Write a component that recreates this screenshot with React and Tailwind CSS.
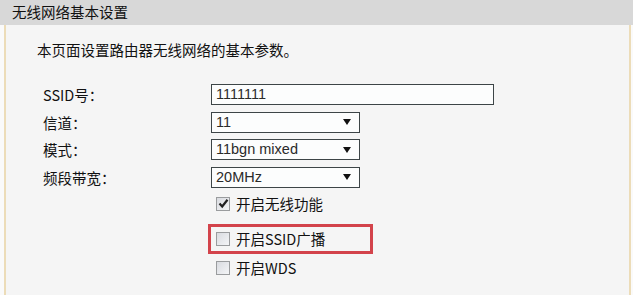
import React from 'react';

const cjk = { fontFamily: '"Noto Sans CJK SC", "Noto Sans", sans-serif' };
const latin = { fontFamily: '"Liberation Sans", Arial, sans-serif' };

function Select({ value }) {
    return (
        <div className="w-[149px] h-[21px] bg-[#fcfdfd] border border-[#3d4547] flex items-center justify-between pl-[4px] pr-[8px] text-[14.5px] text-[#2a2a2a]" style={latin}>
            <span>{value}</span>
            <svg width="8" height="8" viewBox="0 0 8 8"><path d="M0 1 L8 1 L4 7 Z" fill="#111" /></svg>
        </div>
    );
}

function Checkbox({ checked }) {
    return (
        <span className="w-[14px] h-[14px] border border-[#9a9c9e] bg-gradient-to-br from-[#d9dbe0] to-[#f4f5f7] flex items-center justify-center shrink-0">
            {checked &&
                <svg width="11" height="11" viewBox="0 0 11 11">
                    <path d="M1.5 5.5 L4.2 8.5 L9.5 1.8" stroke="#222" strokeWidth="2.2" fill="none" />
                </svg>
            }
        </span>
    );
}

export default function App() {
    return (
        <div className="w-[633px] h-[295px] bg-[#fafafa] overflow-hidden text-[#111]" style={cjk}>
            <div className="h-[25px] bg-[#d8d8d8] pl-[12px] flex items-center text-[14.5px] leading-none">
                无线网络基本设置
            </div>
            <div className="ml-[4px] mr-[2px] h-[270px] bg-[#f5f5f5] border-l-2 border-r-2 border-[#ecdcb8] pl-[31px] pt-[15px]">
                <p className="text-[14.5px] leading-[20px]">本页面设置路由器无线网络的基本参数。</p>
                <div className="grid grid-cols-[168px_auto] gap-y-[6.5px] mt-[24px] pl-[6px] text-[14.5px] leading-[21px] items-center">
                    <span>SSID号：</span>
                    <div className="w-[283px] h-[21px] bg-[#fcfdfd] border border-[#3d4547] flex items-center pl-[4px] text-[14.5px] text-[#2a2a2a]" style={latin}>1111111</div>
                    <span>信道：</span>
                    <Select value="11" />
                    <span>模式：</span>
                    <Select value="11bgn mixed" />
                    <span>频段带宽：</span>
                    <Select value="20MHz" />
                </div>
                <div className="ml-[171px] flex flex-col text-[14.5px]">
                    <div className="h-[22px] mt-[5px] pl-[8px] flex items-center gap-[6px]">
                        <Checkbox checked />
                        <span>开启无线功能</span>
                    </div>
                    <div className="w-[165px] h-[30px] mt-[9px] border-[3px] border-[#d3434b] pl-[5px] flex items-center gap-[6px]">
                        <Checkbox />
                        <span>开启SSID广播</span>
                    </div>
                    <div className="h-[22px] mt-[3px] pl-[8px] flex items-center gap-[6px]">
                        <Checkbox />
                        <span>开启WDS</span>
                    </div>
                </div>
            </div>
        </div>
    );
}
